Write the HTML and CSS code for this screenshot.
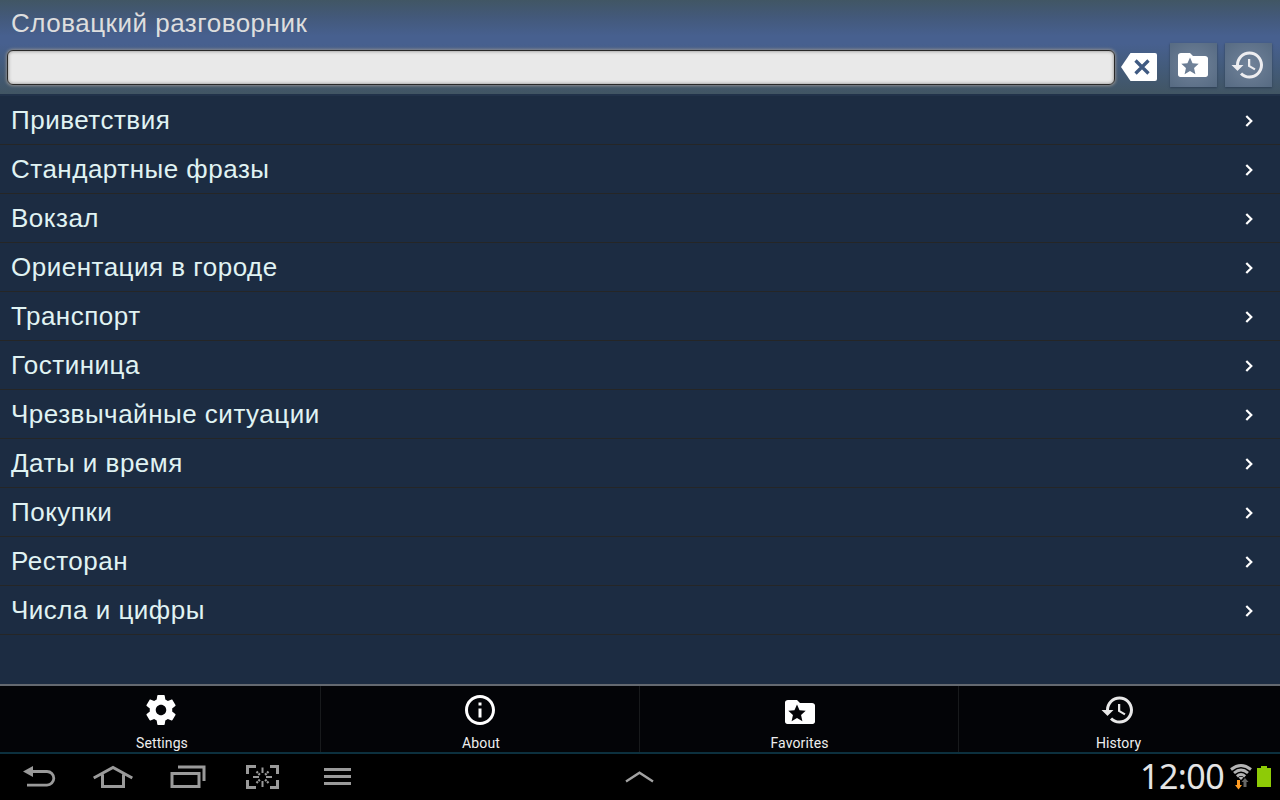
FILE: index.html
```html
<!DOCTYPE html>
<html lang="ru">
<head>
<meta charset="utf-8">
<title>Словацкий разговорник</title>
<link rel="stylesheet" href="styles.css">
</head>
<body>
<svg class="defs" aria-hidden="true">
  <symbol id="history" viewBox="0 0 24 24"><path d="M13 3c-4.970 0-9 4.030-9 9H1l3.890 3.890.070.140L9 12H6c0-3.870 3.130-7 7-7s7 3.130 7 7-3.130 7-7 7c-1.930 0-3.680-.790-4.940-2.060l-1.420 1.420C8.270 19.990 10.510 21 13 21c4.970 0 9-4.030 9-9s-4.030-9-9-9zm-1 5v5l4.280 2.540.720-1.210-3.500-2.080V8H12z"/></symbol>
  <symbol id="favorites" viewBox="0 0 24 24"><path fill-rule="evenodd" d="M20 6h-8l-2-2H4c-1.100 0-2 .7-2 1.600v12.800c0 .9.7 1.600 1.600 1.600h16.800c.9 0 1.600-.7 1.600-1.600V7.600c0-.9-.9-1.600-2-1.600zM10 7l1.700 3.800 4.100.4-3.100 2.800.9 4.100L10 16l-3.600 2.100.9-4.100-3.100-2.800 4.100-.4z"/></symbol>
  <symbol id="chevron" viewBox="0 0 10 14"><path d="M2.300 2l5 5-5 5" fill="none" stroke="#fff" stroke-width="2.200"/></symbol>
</svg>
<header class="header">
  <h1 class="title">Словацкий разговорник</h1>
  <div class="search">
    <input class="field" type="text" aria-label="Поиск">
    <svg class="clear" viewBox="0 0 36 28"><path fill="#fff" d="M9.500 0H34q2 0 2 2v24q0 2-2 2H9.500L0 14z"/><path d="M14.500 7.500l13 13m0-13l-13 13" stroke="#3f5a82" stroke-width="3.300"/></svg>
    <button class="tool"><svg class="icon"><use href="#favorites"/></svg></button>
    <button class="tool tool-history"><svg class="icon"><use href="#history"/></svg></button>
  </div>
</header>
<main class="list">
  <div class="row"><span>Приветствия</span><svg class="chev"><use href="#chevron"/></svg></div>
  <div class="row"><span>Стандартные фразы</span><svg class="chev"><use href="#chevron"/></svg></div>
  <div class="row"><span>Вокзал</span><svg class="chev"><use href="#chevron"/></svg></div>
  <div class="row"><span>Ориентация в городе</span><svg class="chev"><use href="#chevron"/></svg></div>
  <div class="row"><span>Транспорт</span><svg class="chev"><use href="#chevron"/></svg></div>
  <div class="row"><span>Гостиница</span><svg class="chev"><use href="#chevron"/></svg></div>
  <div class="row"><span>Чрезвычайные ситуации</span><svg class="chev"><use href="#chevron"/></svg></div>
  <div class="row"><span>Даты и время</span><svg class="chev"><use href="#chevron"/></svg></div>
  <div class="row"><span>Покупки</span><svg class="chev"><use href="#chevron"/></svg></div>
  <div class="row"><span>Ресторан</span><svg class="chev"><use href="#chevron"/></svg></div>
  <div class="row"><span>Числа и цифры</span><svg class="chev"><use href="#chevron"/></svg></div>
</main>
<section class="menu">
  <div class="item"><svg class="icon" viewBox="0 0 24 24"><path d="M19.430 12.980c.040-.320.070-.640.070-.980s-.030-.660-.070-.980l2.110-1.650c.190-.150.240-.420.120-.640l-2-3.460c-.120-.220-.390-.300-.610-.220l-2.490 1c-.520-.400-1.080-.730-1.690-.980l-.380-2.650C14.460 2.180 14.250 2 14 2h-4c-.250 0-.460.180-.490.420l-.380 2.650c-.610.250-1.170.590-1.690.980l-2.490-1c-.230-.090-.490 0-.610.220l-2 3.460c-.130.220-.070.490.120.640l2.110 1.650c-.040.320-.070.650-.070.980s.030.660.070.980l-2.110 1.650c-.190.150-.240.420-.120.640l2 3.460c.120.220.390.300.610.220l2.490-1c.520.400 1.080.730 1.690.980l.380 2.650c.030.240.240.420.490.420h4c.250 0 .460-.180.490-.420l.380-2.650c.610-.250 1.170-.590 1.690-.980l2.490 1c.230.090.490 0 .610-.220l2-3.460c.120-.220.070-.490-.120-.640l-2.110-1.650zM12 15.500c-1.930 0-3.500-1.570-3.500-3.500s1.570-3.500 3.500-3.500 3.500 1.570 3.500 3.500-1.570 3.500-3.500 3.500z"/></svg><span>Settings</span></div>
  <div class="item"><svg class="icon" viewBox="0 0 24 24"><path d="M11 17h2v-6h-2v6zm1-15C6.480 2 2 6.480 2 12s4.480 10 10 10 10-4.480 10-10S17.520 2 12 2zm0 18c-4.410 0-8-3.590-8-8s3.590-8 8-8 8 3.590 8 8-3.590 8-8 8zM11 9h2V7h-2v2z"/></svg><span class="about">About</span></div>
  <div class="item"><svg class="icon icon-low"><use href="#favorites"/></svg><span>Favorites</span></div>
  <div class="item"><svg class="icon icon-soft"><use href="#history"/></svg><span>History</span></div>
</section>
<nav class="nav">
  <div class="keys">
    <svg class="key-back" viewBox="0 0 34 24"><path d="M9 6.500h15a6.800 6.800 0 0 1 0 13.600H4" fill="none" stroke="#9a9a9a" stroke-width="2.800"/><path d="M0 6.500L10 1v11z" fill="#9a9a9a"/></svg>
    <svg class="key-home" viewBox="0 0 40 24"><path d="M.7 13L20 2.500 39.300 13M9.500 9.500v12h21v-12" fill="none" stroke="#9a9a9a" stroke-width="3"/></svg>
    <svg class="key-recent" viewBox="0 0 36 24"><path d="M2 8.500h27v13H2zM8 2h26v14" fill="none" stroke="#9a9a9a" stroke-width="3"/></svg>
    <svg class="key-capture" viewBox="0 0 34 24"><g fill="none" stroke="#9a9a9a"><path stroke-width="3" d="M1.500 9V1.500H10M24 1.500h7.500V9M1.500 15v7.500H10M24 22.500h7.500V15"/><path stroke-width="2" d="M7 12h6M20 12h6M16.500 2.500V8M16.500 16v6"/><path stroke-width="2.200" stroke-dasharray="2 .8" d="M10.500 6.500l3.500 3.500M22.500 6.500L19 10M10.500 18l3.500-3.500M22.500 18L19 14.500"/></g></svg>
    <svg class="key-menu" viewBox="0 0 28 24"><path d="M0 4.500h27M0 11.500h27M0 18.500h27" stroke="#9a9a9a" stroke-width="3"/></svg>
  </div>
  <svg class="up" viewBox="0 0 30 12"><path d="M1 10.500L14.500 1.800 28 10.500" fill="none" stroke="#a2a2a2" stroke-width="2.400"/></svg>
  <div class="status">
    <span class="clock">12:00</span>
    <svg class="wifi" viewBox="0 0 22 26"><g fill="none" stroke="#b4b4b4" stroke-width="2.900"><path d="M1 5.500Q11-2.300 21 5.500M4 9Q11 3.200 18 9M6.900 12.400Q11 8.700 15.100 12.400"/></g><path d="M8.500 13.500q2.500-1.500 5 0L11 16z" fill="#bbb"/><path d="M7 16h3v5h2l-3.500 4.500L5 21h2z" fill="#ff9c22"/><path d="M13.500 23v-5h-2l3.500-4 3.500 4h-2v5z" fill="#666"/></svg>
    <svg class="battery" viewBox="0 0 14 21"><path d="M0 2h4V0h6v2h4v19H0z" fill="#8ecb06"/></svg>
  </div>
</nav>
</body>
</html>
```
FILE: styles.css
```css
* { box-sizing: border-box; }
body {
  margin: 0;
  width: 1280px;
  height: 800px;
  overflow: hidden;
  display: flex;
  flex-direction: column;
  background: #1c2c42;
  font-family: "Liberation Sans", Arial, sans-serif;
}
.defs { position: absolute; width: 0; height: 0; }
.header {
  flex: none;
  height: 94px;
  background: linear-gradient(#415664 0, #43597a 17px, #47608f 36px, #47608f 44px, #435b7a 68px, #415563 94px);
}
.title {
  margin: 0;
  height: 43px;
  padding: 8px 0 0 11px;
  font-size: 26px;
  line-height: 30px;
  font-weight: 400;
  letter-spacing: .5px;
  color: #dedede;
}
.search { display: flex; align-items: flex-start; padding-left: 7px; }
.field {
  width: 1108px;
  height: 35px;
  margin: 7px 6px 0 0;
  border: 1px solid #292929;
  border-radius: 6px;
  background: #e9e9e9;
  box-shadow: 0 0 3px 1px #8b8c8d, inset 0 0 3px 1px #aaa;
  outline: 0;
}
.clear { width: 36px; height: 28px; margin: 10px 13px 0 0; }
.tool {
  width: 47px;
  height: 44px;
  margin: 0 8px 0 0;
  padding: 0 0 0 5px;
  border: 0;
  background: radial-gradient(#71839a, #566a82);
  box-shadow: 0 1px 2px #2c3e54;
  display: flex;
  align-items: center;
}
.icon { width: 36px; height: 36px; fill: #fff; display: block; flex: none; }
.tool-history .icon { fill: #ededf0; }
.list { flex: none; height: 590px; border-top: 2px solid #21324a; }
.row {
  height: 49px;
  display: flex;
  align-items: center;
  justify-content: space-between;
  padding: 1px 26px 0 11px;
  border-bottom: 1px solid #252626;
  font-size: 26px;
  letter-spacing: .5px;
  color: #e0f3f3;
}
.chev { width: 10px; height: 14px; margin-top: 1px; }
.menu {
  flex: none;
  height: 70px;
  display: grid;
  grid-template-columns: 321px 319px 319px 321px;
  border-top: 2px solid #646970;
  border-bottom: 2px solid #0c303e;
  background: #030407;
}
.item {
  display: flex;
  flex-direction: column;
  align-items: center;
  padding-top: 6px;
  border-right: 1px solid #181a1c;
  font: 14px/18px Roboto, sans-serif;
  letter-spacing: .1px;
  color: #eee;
}
.item:first-child { padding-left: 2px; }
.item:nth-child(3) { padding-left: 1px; }
.item:last-child { border: 0; padding-right: 4px; }
.item span { margin-top: 6px; }
.item:first-child span, .item .about, .item:last-child span { padding-left: 2px; }
.icon-low { position: relative; top: 2px; }
.icon-soft { fill: #e8e8e8; }
.nav {
  flex: 1;
  display: grid;
  grid-template-columns: 600px 80px 600px;
  align-items: center;
  background: #000;
}
.keys { display: flex; align-items: center; padding-left: 23px; }
.keys svg { height: 24px; flex: none; }
.key-back { width: 34px; margin-right: 36px; }
.key-home { width: 40px; margin-right: 37px; }
.key-recent { width: 36px; margin-right: 40px; }
.key-capture { width: 34px; margin-right: 44px; }
.key-menu { width: 28px; }
.up { width: 30px; height: 12px; justify-self: center; }
.status { display: flex; align-items: center; justify-content: flex-end; padding-right: 9px; }
.clock { font: 34px/40px "Noto Sans", sans-serif; letter-spacing: -.6px; color: #e4e4e4; margin: -2px 6px 0 0; }
.wifi { width: 22px; height: 26px; margin: -1px 5px 0 0; }
.battery { width: 14px; height: 21px; margin-top: -2px; }
```
